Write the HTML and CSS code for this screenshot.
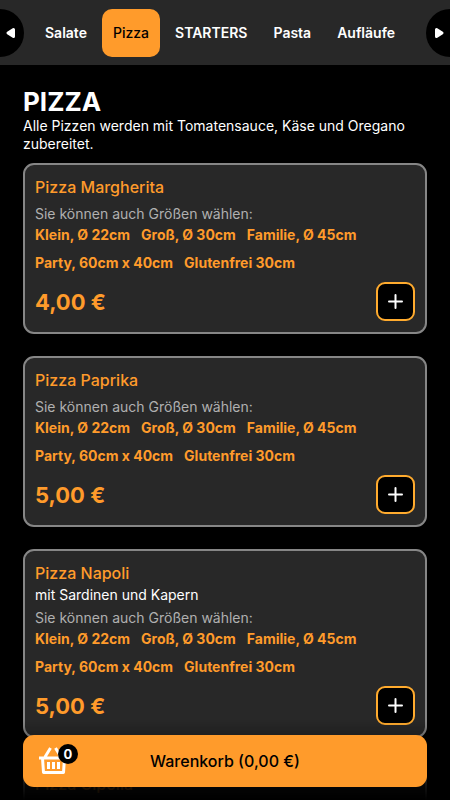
FILE: index.html
```html
<!DOCTYPE html>
<html lang="de">
<head>
<meta charset="utf-8">
<meta name="viewport" content="width=device-width, initial-scale=1">
<title>Pizza</title>
<link rel="stylesheet" href="styles.css">
</head>
<body>
<nav class="tabs" aria-label="Kategorien">
  <button class="arrow arrow-prev" type="button" aria-label="Zurück"><svg width="10" height="12" viewBox="0 0 10 12"><path d="M7.5 2.5v7L2 6z" fill="#fff" stroke="#fff" stroke-width="3" stroke-linejoin="round"/></svg></button>
  <a class="tab" href="#salate">Salate</a>
  <a class="tab tab-active" href="#pizza">Pizza</a>
  <a class="tab" href="#starters">STARTERS</a>
  <a class="tab" href="#pasta">Pasta</a>
  <a class="tab" href="#auflaeufe">Aufläufe</a>
  <button class="arrow arrow-next" type="button" aria-label="Weiter"><svg width="10" height="12" viewBox="0 0 10 12"><path d="M2.5 2.5v7L8 6z" fill="#fff" stroke="#fff" stroke-width="3" stroke-linejoin="round"/></svg></button>
</nav>
<main class="menu" id="pizza">
  <h1 class="heading">PIZZA</h1>
  <p class="intro">Alle Pizzen werden mit Tomatensauce, Käse und Oregano zubereitet.</p>
  <div class="cards">
    <article class="card">
      <h2 class="name">Pizza Margherita</h2>
      <p class="hint">Sie können auch Größen wählen:</p>
      <ul class="sizes"><li>Klein, Ø 22cm</li><li>Groß, Ø 30cm</li><li>Familie, Ø 45cm</li><li>Party, 60cm x 40cm</li><li>Glutenfrei 30cm</li></ul>
      <div class="foot"><span class="price">4,00 €</span><button class="add" type="button" aria-label="Hinzufügen"><svg width="15" height="15" viewBox="0 0 15 15"><path d="M7.5 1v13M1 7.5h13" stroke="#fff" stroke-width="2" stroke-linecap="round"/></svg></button></div>
    </article>
    <article class="card">
      <h2 class="name">Pizza Paprika</h2>
      <p class="hint">Sie können auch Größen wählen:</p>
      <ul class="sizes"><li>Klein, Ø 22cm</li><li>Groß, Ø 30cm</li><li>Familie, Ø 45cm</li><li>Party, 60cm x 40cm</li><li>Glutenfrei 30cm</li></ul>
      <div class="foot"><span class="price">5,00 €</span><button class="add" type="button" aria-label="Hinzufügen"><svg width="15" height="15" viewBox="0 0 15 15"><path d="M7.5 1v13M1 7.5h13" stroke="#fff" stroke-width="2" stroke-linecap="round"/></svg></button></div>
    </article>
    <article class="card">
      <h2 class="name">Pizza Napoli</h2>
      <p class="desc">mit Sardinen und Kapern</p>
      <p class="hint">Sie können auch Größen wählen:</p>
      <ul class="sizes"><li>Klein, Ø 22cm</li><li>Groß, Ø 30cm</li><li>Familie, Ø 45cm</li><li>Party, 60cm x 40cm</li><li>Glutenfrei 30cm</li></ul>
      <div class="foot"><span class="price">5,00 €</span><button class="add" type="button" aria-label="Hinzufügen"><svg width="15" height="15" viewBox="0 0 15 15"><path d="M7.5 1v13M1 7.5h13" stroke="#fff" stroke-width="2" stroke-linecap="round"/></svg></button></div>
    </article>
    <article class="card">
      <h2 class="name">Pizza Cipolla</h2>
    </article>
  </div>
</main>
<div class="dock">
  <button class="cart" type="button">
    <span class="basket">
      <svg width="30" height="28" viewBox="0 0 30 28" fill="none" stroke="#fff"><path d="M0 11h28M3.500 11l1 14.500h20l1-14.500M6 10l5.500-9M22 10l-5.500-9" stroke-width="3" stroke-linejoin="round"/><path d="M9.500 15v7M14.500 15v7M19.500 15v7" stroke-width="3"/></svg>
      <span class="count">0</span>
    </span>
    <span class="total">Warenkorb (0,00 €)</span>
  </button>
</div>
</body>
</html>
```
FILE: styles.css
```css
* {
  box-sizing: border-box;
}

html {
  scrollbar-width: none;
}

body {
  margin: 0;
  background: #000;
  color: #fff;
  font: 14px/18px Inter, "Liberation Sans", sans-serif;
}

h1, h2, p, ul {
  margin: 0;
  padding: 0;
}

button {
  font: inherit;
  padding: 0;
  border: 0;
  cursor: pointer;
}

.tabs {
  position: sticky;
  top: 0;
  z-index: 1;
  display: flex;
  align-items: center;
  gap: 4px;
  padding: 9px 0 8px;
  background: #282828;
  overflow: hidden;
}

.tab {
  padding: 15px 11px;
  border-radius: 10px;
  color: #fff;
  font-weight: 600;
  line-height: 18px;
  text-decoration: none;
}

.tab-active {
  background: #ff9b2b;
  color: #000;
  font-weight: 500;
}

.arrow {
  display: flex;
  align-items: center;
  flex: none;
  width: 48px;
  height: 48px;
  border-radius: 50%;
  background: #000;
}

.arrow-prev {
  justify-content: flex-end;
  margin-left: -24px;
  margin-right: 6px;
  padding-right: 8px;
}

.arrow-next {
  margin-left: auto;
  margin-right: -24px;
  padding-left: 8px;
}

.menu {
  padding: 22px 23px 80px;
}

.heading {
  font-size: 26px;
  font-weight: 700;
  line-height: 30px;
}

.cards {
  display: flex;
  flex-direction: column;
  gap: 22px;
  margin-top: 10px;
}

.card {
  display: flex;
  flex-direction: column;
  padding: 11px 10px;
  border: 2px solid #868686;
  border-radius: 11px;
  background: #282828;
}

.name {
  margin-bottom: 2px;
  color: #ff9b2b;
  font-size: 16px;
  font-weight: 500;
  line-height: 22px;
}

.hint {
  margin-top: 5px;
  color: #b0b0b0;
}

.sizes {
  display: flex;
  flex-wrap: wrap;
  gap: 10px 11px;
  margin-top: 3px;
  list-style: none;
  color: #ff9b2b;
  font-weight: 700;
}

.foot {
  display: flex;
  align-items: center;
  justify-content: space-between;
  margin-top: 10px;
}

.price {
  color: #ff9b2b;
  font-size: 22px;
  font-weight: 700;
}

.add {
  display: grid;
  place-items: center;
  width: 39px;
  height: 39px;
  border: 2px solid #ffab2e;
  border-radius: 9px;
  background: #000;
}

.dock {
  position: fixed;
  right: 0;
  bottom: 0;
  left: 0;
  padding: 15px 23px 13px;
  background: linear-gradient(transparent, #000c 75%, #000);
}

.cart {
  display: flex;
  align-items: center;
  width: 100%;
  height: 52px;
  padding: 0 16px;
  border-radius: 11px;
  background: #ff9b2b;
  color: #000;
  font-size: 16px;
  font-weight: 500;
}

.basket {
  position: relative;
  display: flex;
  width: 30px;
}

.count {
  position: absolute;
  top: -3px;
  left: 19px;
  width: 20px;
  border-radius: 50%;
  background: #000;
  color: #fff;
  font-size: 13px;
  font-weight: 700;
  line-height: 20px;
  text-align: center;
}

.total {
  flex: 1;
  padding-right: 30px;
  text-align: center;
}
```
